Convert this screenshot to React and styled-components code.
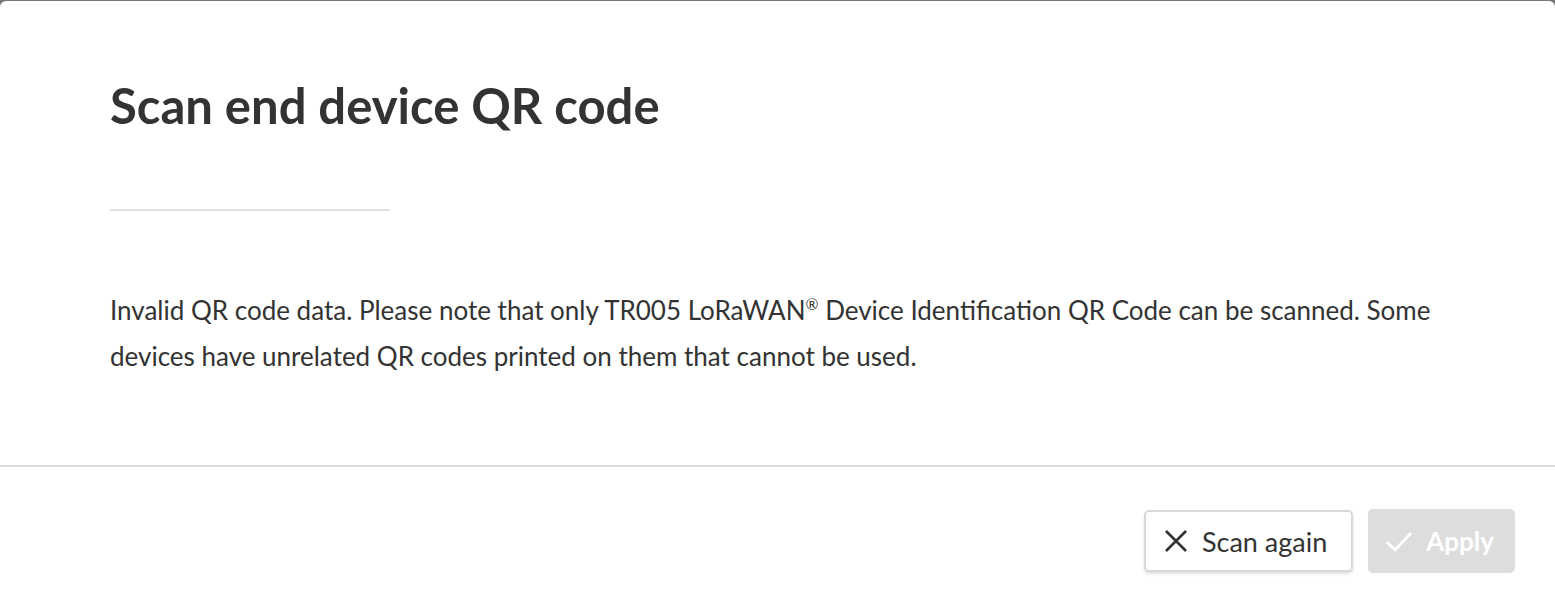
import React from 'react';
import styled, { createGlobalStyle } from 'styled-components';

const GlobalStyle = createGlobalStyle`
  html, body {
    margin: 0;
    padding: 0;
    background: #777;
    overflow: hidden;
  }
  * { box-sizing: border-box; }
`;

const Modal = styled.div`
  margin-top: 1px;
  height: 610px;
  background: #fff;
  border-radius: 6px 6px 0 0;
  font-family: Lato, 'Noto Sans', sans-serif;
  color: #333;
  display: flex;
  flex-direction: column;
`;

const Body = styled.div`
  padding: 72px 110px 0;
  height: 464px;
`;

const Title = styled.h1`
  margin: 0;
  font-size: 49px;
  line-height: 64px;
  font-weight: 700;
  color: #333;
`;

const Divider = styled.hr`
  width: 280px;
  margin: 72px 0 0;
  border: 0;
  border-top: 2px solid #e0e0e0;
`;

const Message = styled.p`
  margin: 76px 0 0;
  font-size: 26px;
  line-height: 46px;
  max-width: 1345px;
`;

const Mark = styled.sup`
  font-size: 0.6em;
  line-height: 1;
`;

const Footer = styled.div`
  border-top: 2px solid #ddd;
  display: flex;
  justify-content: flex-end;
  gap: 15px;
  padding: 42px 40px 0;
`;

const Button = styled.button`
  display: flex;
  align-items: center;
  gap: 14px;
  height: ${p => (p.$primary ? '64px' : '62px')};
  margin-top: ${p => (p.$primary ? '0' : '1px')};
  padding: ${p => (p.$primary ? '0 21px 0 18px' : '0 24px 0 19px')};
  border-radius: 5px;
  font-family: inherit;
  font-size: ${p => (p.$primary ? '26px' : '27px')};
  font-weight: ${p => (p.$primary ? 700 : 400)};
  color: ${p => (p.$primary ? '#fff' : '#333')};
  background: ${p => (p.$primary ? '#ddd' : '#fff')};
  border: ${p => (p.$primary ? '0' : '2px solid #d8d8d8')};
  box-shadow: ${p => (p.$primary ? 'none' : '0 2px 3px rgba(0,0,0,0.12)')};
  cursor: default;
`;

const XIcon = () => (
  <svg width="23" height="22" viewBox="0 0 23 22">
    <path d="M1 1 L21 21 M21 1 L1 21" stroke="#333" strokeWidth="2.6" fill="none" />
  </svg>
);

const CheckIcon = () => (
  <svg width="26" height="22" viewBox="0 0 26 22">
    <path d="M1 12 L9 20 L25 3" stroke="#fff" strokeWidth="2.8" fill="none" />
  </svg>
);

export default function App() {
  return (
    <>
      <GlobalStyle />
      <Modal>
        <Body>
          <Title>Scan end device QR code</Title>
          <Divider />
          <Message>
            Invalid QR code data. Please note that only TR005 LoRaWAN<Mark>®</Mark> Device Identification QR Code can be scanned. Some devices have unrelated QR codes printed on them that cannot be used.
          </Message>
        </Body>
        <Footer>
          <Button>
            <XIcon />
            Scan again
          </Button>
          <Button $primary disabled>
            <CheckIcon />
            Apply
          </Button>
        </Footer>
      </Modal>
    </>
  );
}
